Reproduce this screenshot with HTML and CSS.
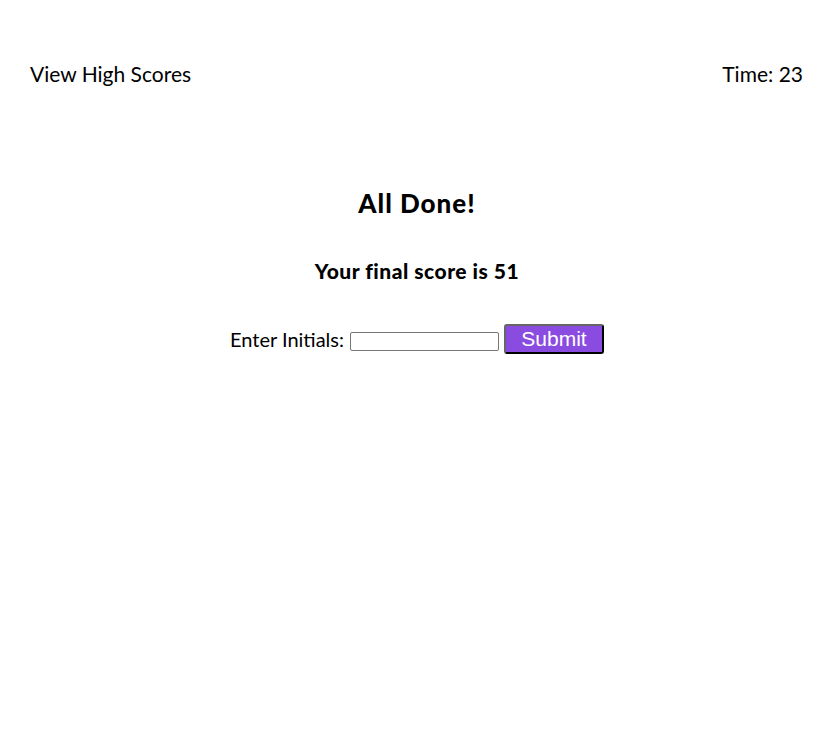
FILE: index.html
```html
<!DOCTYPE html>
<html>
<head>
<meta charset="utf-8">
<link rel="stylesheet" href="styles.css">
</head>
<body>
<header class="top">
  <a class="scores-link">View High Scores</a>
  <span class="timer">Time: 23</span>
</header>
<main class="done">
  <h1 class="title">All Done!</h1>
  <p class="score">Your final score is 51</p>
  <form class="entry">
    <label class="entry-label">Enter Initials:</label>
    <input class="entry-input" type="text">
    <button class="entry-btn" type="button">Submit</button>
  </form>
</main>
</body>
</html>
```
FILE: styles.css
```css
html, body {
  margin: 0;
  padding: 0;
  background: #fff;
}
body {
  font-family: "Lato", "Open Sans", sans-serif;
  color: #000;
}
.top {
  display: flex;
  justify-content: space-between;
  align-items: center;
  padding: 59px 31px 0 30px;
  height: 28px;
  font-size: 21px;
}
.scores-link {
  color: #000;
}
.done {
  display: flex;
  flex-direction: column;
  align-items: center;
}
.title {
  margin: 101px 0 0;
  font-size: 26px;
  font-weight: 900;
  line-height: 30px;
  letter-spacing: 1px;
}
.score {
  margin: 41px 0 0;
  font-size: 21px;
  font-weight: 900;
  line-height: 24px;
  letter-spacing: 0.5px;
}
.entry {
  margin: 41px 0 0;
  display: flex;
  align-items: center;
  gap: 5px;
}
.entry-label {
  font-size: 20px;
  line-height: 24px;
  margin-right: 1px;
}
.entry-input {
  width: 145px;
  height: 15px;
  margin: 5px 0 0;
  padding: 1px;
  border: 1px solid #767676;
  border-radius: 2px;
}
.entry-btn {
  width: 100px;
  height: 30px;
  background: #8a4be0;
  color: #fff;
  font-family: "Liberation Sans", Arial, sans-serif;
  font-size: 21px;
  line-height: 24px;
  padding: 0;
  border: 2px outset #555;
  border-color: #666 #222 #222 #666;
  border-radius: 3px;
}
```
